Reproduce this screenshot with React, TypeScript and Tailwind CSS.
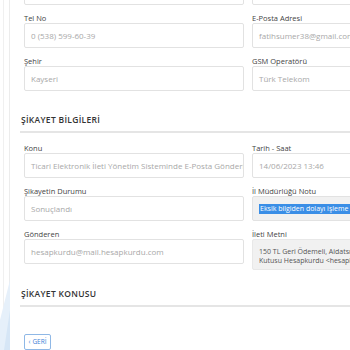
import React from 'react';

const font = { fontFamily: '"Open Sans", "Liberation Sans", sans-serif' };

function Field({ label, value, tone = 'bg-white' }: { label: string; value: React.ReactNode; tone?: string }) {
  return (
    <div className="pt-[8px]">
      <div className="h-[10px] leading-[10px] text-[7.5px] font-medium text-[#444] whitespace-nowrap">{label}</div>
      <div className={`h-[25px] border border-[#e2e2e2] rounded-[2px] ${tone} px-[6px] flex items-center text-[8px] text-[#a8a8a8] whitespace-nowrap overflow-hidden`}>
        {value}
      </div>
    </div>
  );
}

function Heading({ title }: { title: string }) {
  return (
    <div>
      <div className="pl-[1px] h-[12px] leading-[12px] text-[8.5px] font-semibold text-[#333] tracking-[0.3px]">{title}</div>
      <div className="mt-[5px] h-[2px] bg-[#e5e5e5]" />
    </div>
  );
}

export default function App() {
  return (
    <div className="w-[350px] h-[350px] overflow-hidden bg-white flex" style={font}>
      <div className="w-[10px] shrink-0 relative border-r border-[#ececec]">
        <div className="absolute left-[3px] top-0 bottom-0 w-px bg-[#f0f0f0]" />
        <svg className="absolute left-0 bottom-0" width="10" height="70" viewBox="0 0 10 70">
          <path d="M0 70 L0 40 L10 0 L10 70 Z" fill="#e6f0fa" />
          <path d="M4 70 L10 30 L10 70 Z" fill="#d6e6f6" />
        </svg>
      </div>
      <div className="flex-1 pl-[10px] min-w-0">
        <div className="pl-[4px] grid grid-cols-[220px_220px] gap-x-2 -mt-[20px]">
          <div className="h-[25px] border border-[#e2e2e2] rounded-[2px]" />
          <div className="h-[25px] border border-[#e2e2e2] rounded-[2px]" />
          <Field label="Tel No" value="0 (538) 599-60-39" />
          <Field label="E-Posta Adresi" value="fatihsumer38@gmail.com" />
          <Field label="Şehir" value="Kayseri" />
          <Field label="GSM Operatörü" value="Türk Telekom" />
        </div>

        <div className="mt-[23px]">
          <Heading title="ŞİKAYET BİLGİLERİ" />
        </div>

        <div className="pl-[4px] grid grid-cols-[220px_220px] gap-x-2 mt-[2px]">
          <Field label="Konu" value="Ticari Elektronik İleti Yönetim Sisteminde E-Posta Gönderi" />
          <Field label="Tarih - Saat" value="14/06/2023 13:46" />
          <Field label="Şikayetin Durumu" value="Sonuçlandı" />
          <Field
            label="İl Müdürlüğü Notu"
            tone="bg-[#f1f1f1]"
            value={<span className="bg-[#3a8ee6] text-white text-[7px] font-medium px-px leading-[10px]">Eksik bilgiden dolayı işleme alınmamıştır.</span>}
          />
          <Field label="Gönderen" value="hesapkurdu@mail.hesapkurdu.com" />
          <div className="pt-[8px]">
            <div className="h-[10px] leading-[10px] text-[7.5px] font-medium text-[#444]">İleti Metni</div>
            <div className="h-[31px] border border-[#e8e8e8] rounded-[2px] bg-[#f1f1f1] px-[6px] pt-[7px] text-[7px] leading-[9px] text-[#555] whitespace-nowrap overflow-hidden">
              <div>150 TL Geri Ödemeli, Aidatsız Kredi Kartı</div>
              <div>Kutusu Hesapkurdu &lt;hesapkurdu@mail</div>
            </div>
          </div>
        </div>

        <div className="mt-[18px]">
          <Heading title="ŞİKAYET KONUSU" />
        </div>

        <div className="pl-[4px] mt-[27px]">
          <button className="h-[16px] w-[27px] border border-[#8fb8e6] rounded-[2px] text-[6.5px] text-[#3b82d6] flex items-center justify-center gap-[2px]">
            <span>‹</span>
            <span>GERİ</span>
          </button>
        </div>
      </div>
    </div>
  );
}
